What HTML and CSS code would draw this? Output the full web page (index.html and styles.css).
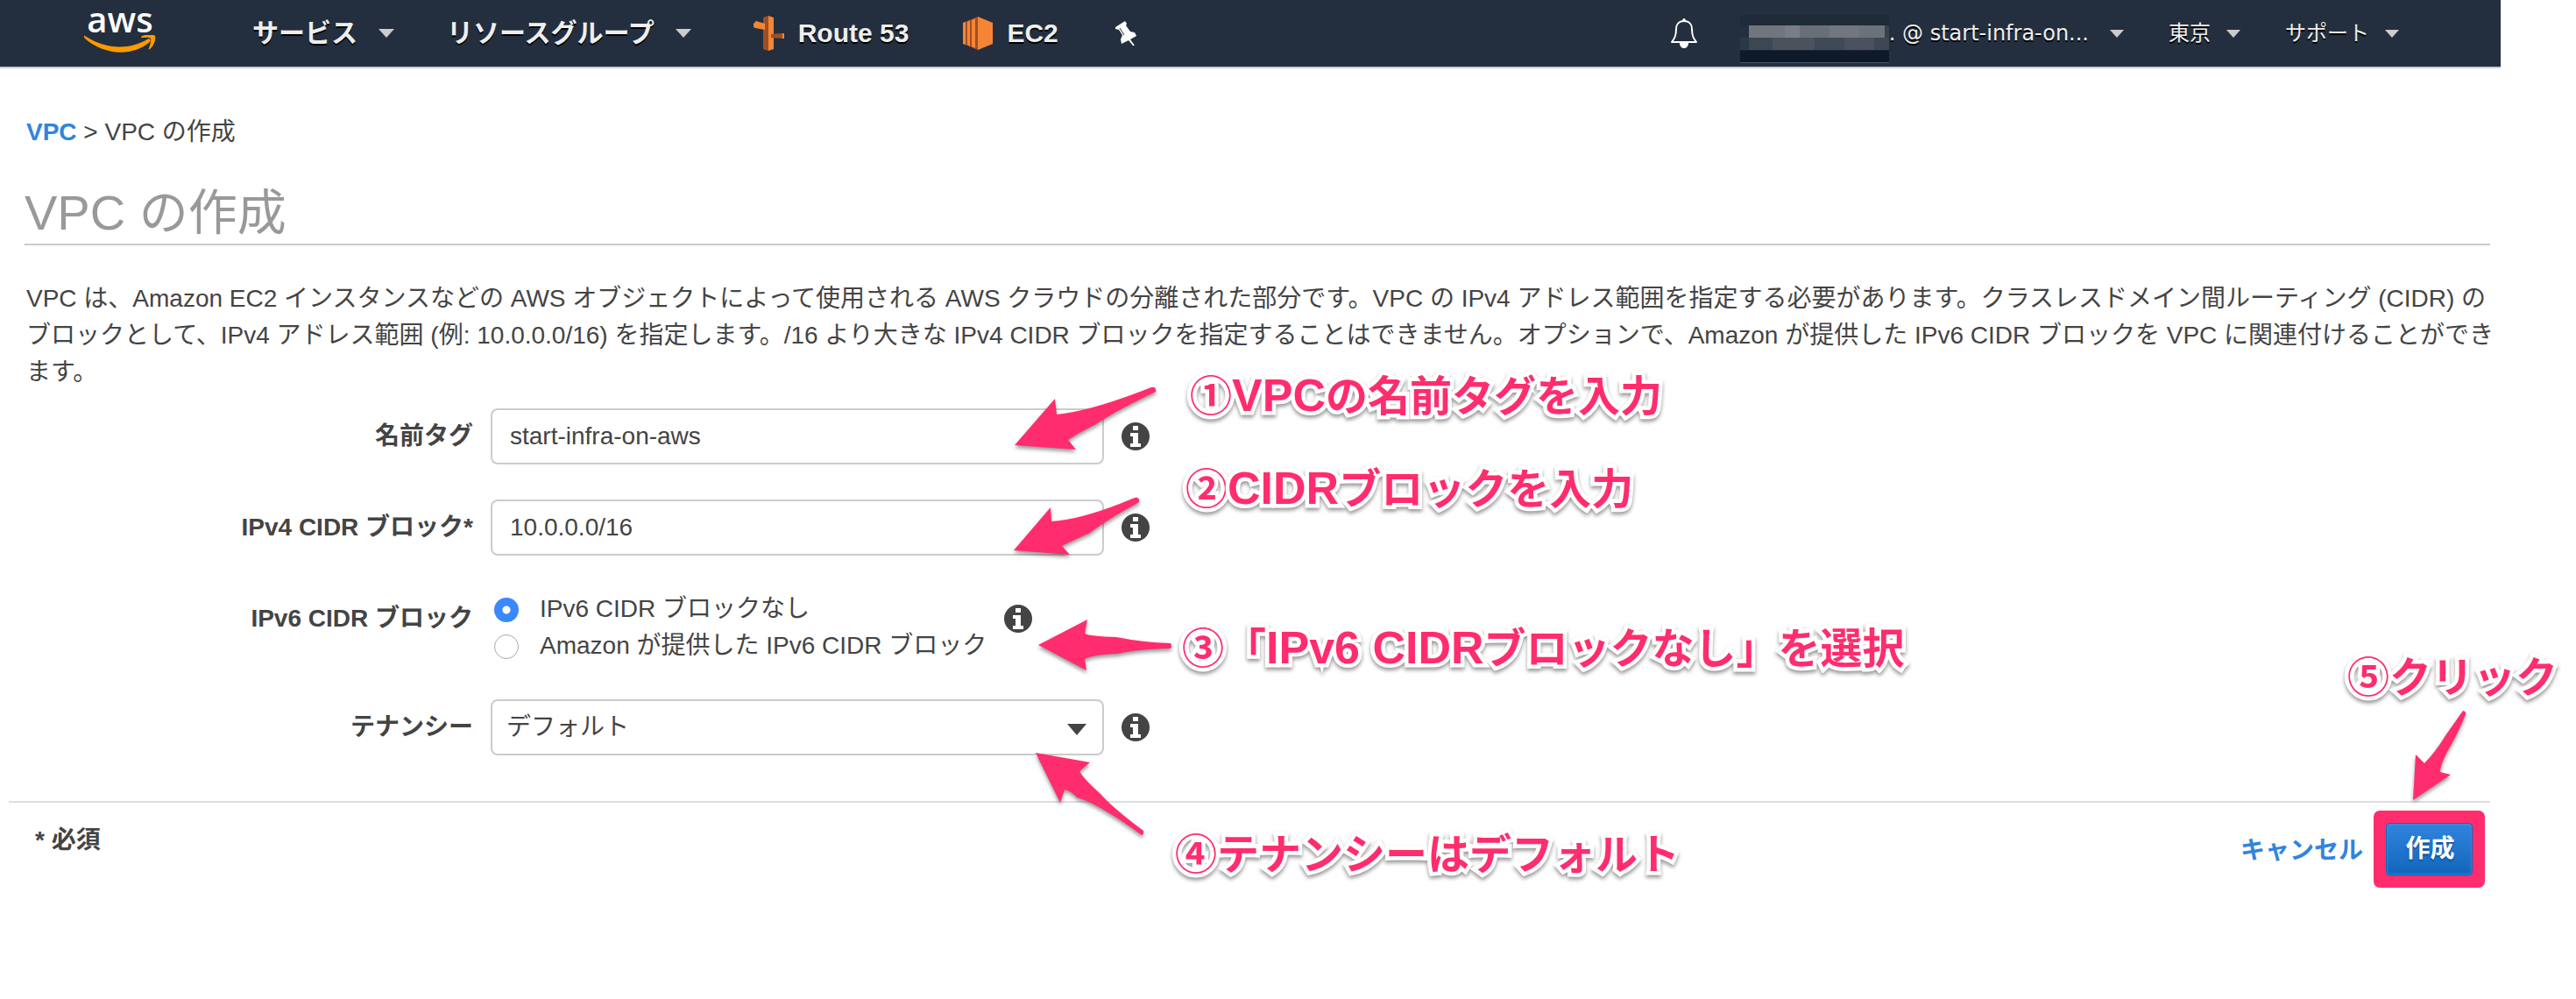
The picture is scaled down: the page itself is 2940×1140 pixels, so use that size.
FILE: index.html
```html
<!DOCTYPE html>
<html lang="ja">
<head>
<meta charset="utf-8">
<title>VPC の作成</title>
<link rel="stylesheet" href="styles.css">
</head>
<body>
<div class="console">
  <header class="topbar">
    <a class="logo" href="#" aria-label="aws">
      <span class="logo-text">aws</span>
      <svg class="logo-smile" viewBox="0 0 82 20" aria-hidden="true"><path d="M1 1c26 17 52 15 71 4 3-2 5 1 3 3C52 27 19 21 0 3 0 1 0 0 1 1z"/><path d="M66 1c5-2 14-2 15 0 1 3-1 11-6 15-1 1-2 0-1-1 1-3 3-9 2-11-2-2-7-1-10-1-1 0-1-1 0-2z"/></svg>
    </a>
    <nav class="menu">
      <button class="menu-item services" type="button">サービス<svg class="caret" viewBox="0 0 18 10"><path d="M0 0h18L9 10z"/></svg></button>
      <button class="menu-item groups" type="button">リソースグループ<svg class="caret" viewBox="0 0 18 10"><path d="M0 0h18L9 10z"/></svg></button>
      <a class="menu-item shortcut route" href="#">
        <svg class="route-icon" viewBox="0 0 36 40" aria-hidden="true"><path fill="#9d5025" d="M12 2l6-2v40l-6-2z"/><path fill="#f58534" d="M18 0l6 2v36l-6 2z"/><path fill="#f58534" d="M1 9l3-3 10 3v7L3 14l-2-1z"/><path fill="#9d5025" d="M21 21l13-1v6l-13-1z"/><path fill="#f58534" d="M34 20h2v6h-2z"/></svg>
        Route 53</a>
      <a class="menu-item shortcut ec2" href="#">
        <svg class="ec2-icon" viewBox="0 0 34 38" aria-hidden="true"><path fill="#9d5025" d="M0 7l17-7v38L0 31z"/><path fill="#f58534" d="M17 0l17 7v24l-17 7zM0 7l3-1v26l-3-1zM5 6l3-2v30l-3-2zM10 4l4-2v34l-4-2z"/></svg>
        EC2</a>
      <button class="menu-item pin" type="button" aria-label="ピン"><svg viewBox="0 0 25 28"><path fill="#fff" d="M1 7L12 0l2 3-1 2 5 7 5 1 2 4-7 4 5 7h-2l-5-6-8 4-1-5 2-5-4-6-4-1z"/><path fill="none" stroke="#232f3e" d="M6 8l5 8"/></svg></button>
    </nav>
    <div class="account">
      <button class="menu-item bell" type="button" aria-label="通知"><svg viewBox="0 0 32 34"><path fill="none" stroke="#fff" stroke-width="2" stroke-linejoin="round" d="M16 3c-6 0-9 4-9 9 0 8-2 11-5 15h28c-3-4-5-7-5-15 0-5-3-9-9-9z"/><path fill="#fff" d="M14 3c0-4 4-4 4 0zM11 28h10c0 8-10 8-10 0z"/></svg></button>
      <button class="menu-item user" type="button"><span class="redacted"></span><span class="user-name">. @ start-infra-on...</span><svg class="caret small" viewBox="0 0 16 9"><path d="M0 0h16L8 9z"/></svg></button>
      <button class="menu-item region" type="button">東京<svg class="caret small" viewBox="0 0 16 9"><path d="M0 0h16L8 9z"/></svg></button>
      <button class="menu-item support" type="button">サポート<svg class="caret small" viewBox="0 0 16 9"><path d="M0 0h16L8 9z"/></svg></button>
    </div>
  </header>

  <main class="page">
    <div class="crumbs"><a href="#">VPC</a> &gt; VPC の作成</div>
    <h1>VPC の作成</h1>
    <p class="intro">VPC は、Amazon EC2 インスタンスなどの AWS オブジェクトによって使用される AWS クラウドの分離された部分です。VPC の IPv4 アドレス範囲を指定する必要があります。クラスレスドメイン間ルーティング (CIDR) のブロックとして、IPv4 アドレス範囲 (例: 10.0.0.0/16) を指定します。/16 より大きな IPv4 CIDR ブロックを指定することはできません。オプションで、Amazon が提供した IPv6 CIDR ブロックを VPC に関連付けることができます。</p>

    <form class="form" id="vpc">
      <label class="label" for="name">名前タグ</label>
      <div class="field"><input class="box" id="name" type="text" value="start-infra-on-aws"><svg class="info" viewBox="0 0 32 32"><use href="#info"/></svg></div>
      <label class="label" for="cidr">IPv4 CIDR ブロック*</label>
      <div class="field"><input class="box" id="cidr" type="text" value="10.0.0.0/16"><svg class="info" viewBox="0 0 32 32"><use href="#info"/></svg></div>
      <span class="label" id="v6">IPv6 CIDR ブロック</span>
      <div class="field" role="radiogroup" aria-labelledby="v6">
        <div class="radios">
          <label><input type="radio" name="v6" checked>IPv6 CIDR ブロックなし</label>
          <label><input type="radio" name="v6">Amazon が提供した IPv6 CIDR ブロック</label>
        </div>
        <svg class="info" viewBox="0 0 32 32"><use href="#info"/></svg>
      </div>
      <label class="label" for="tenancy">テナンシー</label>
      <div class="field"><select class="box" id="tenancy"><option>デフォルト</option></select><svg class="info" viewBox="0 0 32 32"><use href="#info"/></svg></div>
    </form>
  </main>

  <footer class="actions">
    <span class="required">* 必須</span>
    <a class="cancel" href="#">キャンセル</a>
    <div class="highlight"><button class="create" type="submit" form="vpc">作成</button></div>
  </footer>
</div>

<svg class="defs" aria-hidden="true"><defs><g id="info"><circle cx="16" cy="16" r="16" fill="#444"/><path fill="#fff" d="M13 4h6v5h-6zM10 12h9v12h3v4H10v-4h3v-8h-3z"/></g></defs></svg>

<svg class="arrow a1" viewBox="0 0 162 72"><path d="M156 1q6-1 5 5-50 24-68 37-22 11-32 18l9 11L0 67 46 14l2 18q40-4 108-31z"/></svg>
<svg class="arrow a2" viewBox="0 0 144 66"><path d="M138 1q6-1 5 5-40 22-56 35-22 10-32 15l9 10L0 61 42 12l1 16q36-2 95-27z"/></svg>
<svg class="arrow a3" viewBox="0 0 152 58"><path d="M151 27q2 3 0 6-40 1-60 6-28 1-38 6l2 13L0 29 56 0l-3 16q6 3 36 4 30 6 62 7z"/></svg>
<svg class="arrow a4" viewBox="0 0 124 94"><path d="M0 0l62 11-12 10q4 8 24 26 16 18 49 42 1 4-2 5Q70 57 47 51q-6-7-14-9l-5 15z"/></svg>
<svg class="arrow a5" viewBox="0 0 60 102"><path d="M57 0q4 1 3 4-8 20-16 34-13 22-13 32l12 3L0 102 3 50l10 10q12-12 25-33Q50 10 57 0z"/></svg>

<div class="note n1">①<b>VPC</b>の名前タグを入力</div>
<div class="note n2">②<b>CIDR</b>ブロックを入力</div>
<div class="note n3">③「<b>IPv6 CIDR</b>ブロックなし」を選択</div>
<div class="note n4">④テナンシーはデフォルト</div>
<div class="note n5">⑤クリック</div>
</body>
</html>
```
FILE: styles.css
```css
* { box-sizing: border-box; }

body {
  position: relative;
  margin: 0;
  background: #fff;
  color: #444;
  font: 28px/42px "Liberation Sans", "Noto Sans CJK JP", sans-serif;
}

button, input, select { font: inherit; color: inherit; }
a { color: #3184dd; text-decoration: none; font-weight: bold; }
.defs { position: absolute; width: 0; height: 0; }

.console { margin-right: 86px; }

/* Top bar */
.topbar {
  display: flex;
  align-items: stretch;
  height: 78px;
  padding: 0 116px 0 96px;
  background: #232f3e;
  border-bottom: 2px solid #c8cacd;
}
.logo { width: 82px; text-align: center; }
.logo-text {
  display: block;
  height: 40px;
  color: #fff;
  font: 600 40px/44px "Open Sans", sans-serif;
}
.logo-smile { display: block; width: 82px; height: 20px; fill: #f90; }
.menu, .account { display: flex; }
.account { margin-left: auto; font-size: 24px; }
.menu { margin-left: 110px; font-size: 30px; }
.menu-item {
  display: flex;
  align-items: center;
  padding: 0;
  border: 0;
  background: none;
  color: #eee;
  font-weight: bold;
  text-shadow: 0 2px 0 #000;
  white-space: nowrap;
}
.account .menu-item { font-weight: normal; }
.caret { width: 18px; height: 10px; margin-left: 24px; fill: #ccc; }
.caret.small { width: 16px; height: 9px; margin-left: 18px; }
.user .caret.small { margin-left: 24px; }
.groups { margin-left: 60px; }
.shortcut { gap: 16px; }
.route { margin-left: 70px; }
.route-icon { width: 36px; height: 40px; }
.ec2 { margin-left: 62px; }
.ec2-icon { width: 34px; height: 38px; }
.pin { margin-left: 64px; }
.pin svg { width: 25px; height: 28px; }
.bell svg { width: 32px; height: 34px; }
.user { margin-left: 48px; }
.redacted {
  width: 170px;
  height: 55px;
  margin-top: 12px;
  background:
    linear-gradient(90deg, #232f3e 6%, #71757e 6% 30%, #7a7d86 30% 40%, #696f77 40% 60%, #72767f 60% 80%, #6b7279 80% 97%, #35414c 97%) 0 12px / 100% 14px no-repeat,
    linear-gradient(90deg, #2c3843 6%, #3d4751 6% 22%, #4c525c 22% 50%, #3f4a54 50% 70%, #4b515d 70% 90%, #3e4852 90%) 0 26px / 100% 14px no-repeat,
    linear-gradient(#465463, #465463) 0 54px / 100% 1px no-repeat,
    linear-gradient(#1f2b39 40px, #0e1a2a 41px);
}
.user-name { font-family: "DejaVu Sans", sans-serif; }
.region { margin-left: 51px; }
.support { margin-left: 51px; }

/* Page content */
.page { padding: 52px 12px 52px 28px; }
.crumbs { padding: 0 2px; }
h1 {
  margin: 36px 0 0;
  border-bottom: 2px solid #ccc;
  color: #999;
  font-size: 56px;
  font-weight: normal;
  line-height: 70px;
}
.intro { margin: 40px -8px 0 0; padding-left: 2px; }
.form {
  display: grid;
  grid-template-columns: 512px 1fr;
  column-gap: 20px;
  row-gap: 40px;
  margin-top: 20px;
}
.label { font-weight: bold; line-height: 64px; text-align: right; }
.field { display: flex; align-items: flex-start; }
.box {
  width: 700px;
  height: 64px;
  padding: 0 20px;
  border: 2px solid #ccc;
  border-radius: 8px;
  background: #fff;
}
select.box {
  appearance: none;
  padding: 0 16px;
  background: url("data:image/svg+xml,%3Csvg xmlns='http://www.w3.org/2000/svg' viewBox='0 0 22 13'%3E%3Cpath fill='%23444' d='M0 0h22L11 13z'/%3E%3C/svg%3E") right 18px top 26px / 22px 13px no-repeat;
}
.info { flex: none; width: 32px; height: 32px; margin: 16px 0 0 20px; }
.radios label { display: flex; align-items: center; height: 42px; }
.radios input {
  appearance: none;
  width: 28px;
  height: 28px;
  margin: 2px 24px 0 4px;
  border: 1px solid #aaa;
  border-radius: 50%;
  background: #fff;
}
.radios input:checked {
  border: 0;
  background: radial-gradient(circle, #fff 4px, #3b88fd 5px);
}

/* Footer actions */
.actions {
  display: flex;
  align-items: flex-start;
  margin: 0 12px 0 10px;
  padding: 9px 6px 0 30px;
  border-top: 2px solid #ddd;
}
.required { margin: 13px auto 0 0; font-weight: bold; }
.cancel { margin: 25px 12px 0 0; }
.highlight { border: 14px solid #ff2d6d; border-radius: 7px; background: #ff2d6d; }
.create {
  display: block;
  width: 99px;
  height: 60px;
  padding: 0 0 0 2px;
  border: 1px solid #1166bb;
  border-radius: 4px;
  background: linear-gradient(#3184dd, #1166bb);
  box-shadow: inset 0 0 3px #5599dd;
  color: #fff;
  font-weight: bold;
  text-shadow: 0 2px 2px #0f4f99;
}

/* Callouts drawn over the page */
.arrow {
  position: absolute;
  overflow: visible;
  fill: #ff2d6d;
  filter: drop-shadow(0 3px 2px rgba(0, 0, 0, .4));
}
.a1 { left: 1158px; top: 441px; width: 162px; }
.a2 { left: 1157px; top: 567px; width: 144px; }
.a3 { left: 1185px; top: 707px; width: 152px; }
.a4 { left: 1182px; top: 859px; width: 124px; }
.a5 { left: 2754px; top: 811px; width: 60px; }
.note {
  position: absolute;
  color: #ff2d6d;
  font-size: 48px;
  font-weight: bold;
  line-height: 72px;
  white-space: nowrap;
  -webkit-text-stroke: 9px #fff;
  paint-order: stroke fill;
  filter: drop-shadow(0 3px 2px rgba(0, 0, 0, .4));
}
.note b { font-size: 52px; line-height: 1; }
.n1 { left: 1358px; top: 417px; }
.n2 { left: 1353px; top: 523px; }
.n3 { left: 1349px; top: 705px; }
.n4 { left: 1341px; top: 940px; }
.n5 { left: 2679px; top: 738px; }
```
